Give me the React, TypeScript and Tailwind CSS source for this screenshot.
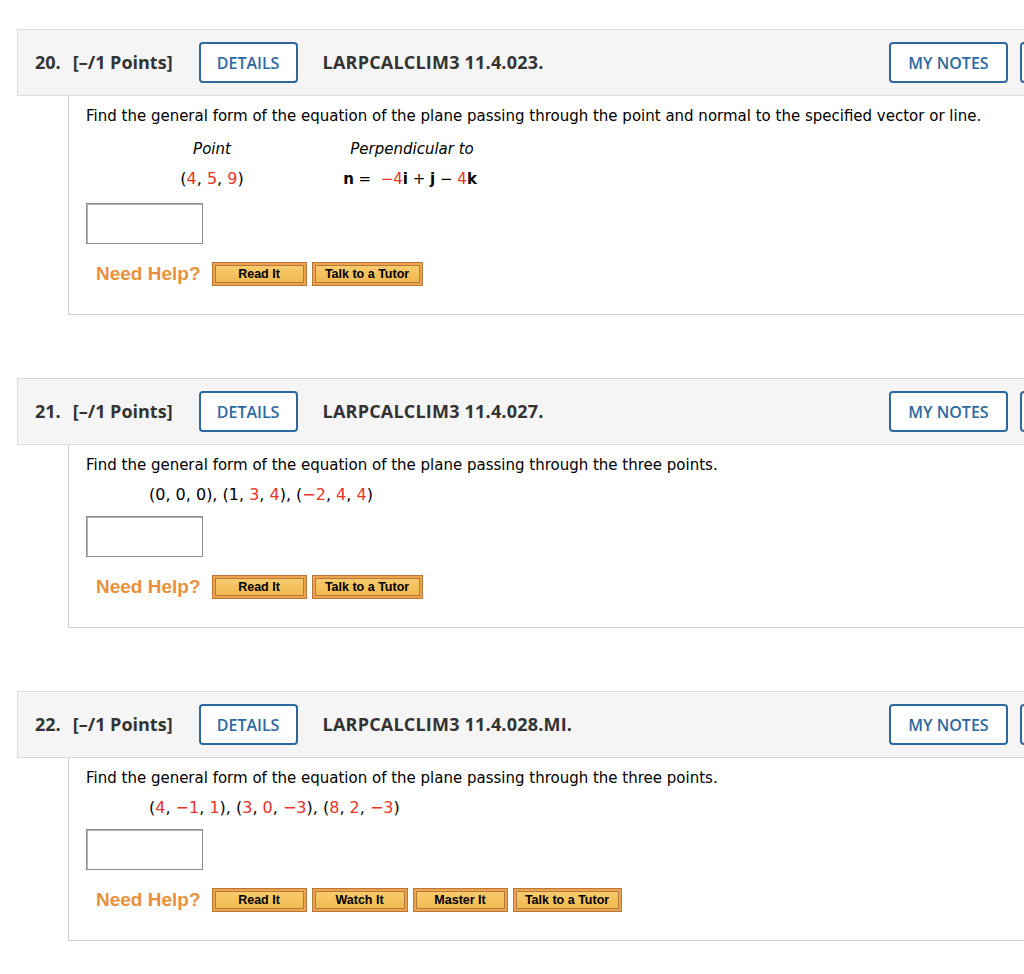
import React from "react";

const R = ({ children }: { children: React.ReactNode }) => (
  <span className="text-[#e8332a]">{children}</span>
);

const HelpButton = ({ label, w }: { label: string; w: string }) => (
  <div className={`h-[24px] ${w} border border-[#b7773a] bg-[#eea34c] p-[2px]`}>
    <div className="flex h-full items-center justify-center border border-[#b27a3e] bg-gradient-to-b from-[#f7cb6c] to-[#f1b951] text-[12.5px] font-bold text-black [font-family:'Liberation_Sans',Arial,sans-serif]">
      {label}
    </div>
  </div>
);

const Header = ({ num, code }: { num: number; code: string }) => (
  <div className="flex h-[67px] w-[1120px] items-center border border-[#dcdcdc] bg-[#f5f5f5] pl-[17px] pr-[16px] text-[#333] [font-family:'Open_Sans',sans-serif]">
    <span className="text-[18px] font-bold">{num}.</span>
    <span className="ml-[12px] text-[18px] font-bold">[–/1 Points]</span>
    <div className="ml-[26px] flex h-[41px] w-[99px] items-center justify-center rounded-[4px] border-2 border-[#2d69a0] bg-white text-[16px] font-semibold text-[#2d69a0]">
      DETAILS
    </div>
    <span className="ml-[25px] text-[18px] font-bold tracking-[0.2px]">{code}</span>
    <div className="ml-auto flex gap-[12px]">
      <div className="flex h-[41px] w-[119px] items-center justify-center rounded-[4px] border-2 border-[#2d69a0] bg-white text-[16px] font-semibold text-[#2d69a0]">
        MY NOTES
      </div>
      <div className="h-[41px] w-[100px] rounded-[4px] border-2 border-[#2d69a0] bg-white" />
    </div>
  </div>
);

const AnswerBox = () => (
  <div className="h-[41px] w-[117px] border border-[#8c8c8c] bg-white shadow-[inset_1px_1px_0_#b5b5b5]" />
);

const NeedHelp = ({ buttons }: { buttons: { label: string; w: string }[] }) => (
  <div className="flex h-[24px] items-center">
    <span className="ml-[10px] text-[19px] leading-[24px] font-bold text-[#e8913c] [font-family:'Liberation_Sans',Arial,sans-serif]">
      Need Help?
    </span>
    <div className="ml-[11px] flex gap-[5px]">
      {buttons.map((b) => (
        <HelpButton key={b.label} label={b.label} w={b.w} />
      ))}
    </div>
  </div>
);

const Body = ({ children }: { children: React.ReactNode }) => (
  <div className="ml-[51px] w-[1100px] border-b border-l border-[#cfcfcf] pl-[17px] text-[15px] text-black [font-family:'DejaVu_Sans',Verdana,sans-serif]">
    {children}
  </div>
);

export default function App() {
  return (
    <div className="min-h-screen w-full overflow-hidden bg-white pl-[17px] pt-[29px]">
      {/* 20 */}
      <Header num={20} code="LARPCALCLIM3 11.4.023." />
      <Body>
        <div className="pt-[10px] leading-[20px]">
          Find the general form of the equation of the plane passing through the point and normal to the specified vector or line.
        </div>
        <div className="mt-[13px] flex leading-[20px]">
          <div className="ml-[65px] w-[122px] text-center italic">Point</div>
          <div className="w-[278px] text-center italic">Perpendicular to</div>
        </div>
        <div className="mt-[10px] flex leading-[20px]">
          <div className="ml-[65px] w-[122px] text-center text-[16px]">
            (<R>4</R>, <R>5</R>, <R>9</R>)
          </div>
          <div className="w-[278px] pr-[4px] text-center">
            <b>n</b> = &nbsp;<R>−4</R>
            <b>i</b> + <b>j</b> − <R>4</R>
            <b>k</b>
          </div>
        </div>
        <div className="mt-[14px]">
          <AnswerBox />
        </div>
        <div className="mt-[18px] pb-[28px]">
          <NeedHelp
            buttons={[
              { label: "Read It", w: "w-[95px]" },
              { label: "Talk to a Tutor", w: "w-[111px]" },
            ]}
          />
        </div>
      </Body>

      {/* 21 */}
      <div className="mt-[63px]">
        <Header num={21} code="LARPCALCLIM3 11.4.027." />
        <Body>
          <div className="pt-[10px] leading-[20px]">
            Find the general form of the equation of the plane passing through the three points.
          </div>
          <div className="mt-[10px] pl-[63px] text-[16px] leading-[20px]">
            (0, 0, 0), (1, <R>3</R>, <R>4</R>), (<R>−2</R>, <R>4</R>, <R>4</R>)
          </div>
          <div className="mt-[11px]">
            <AnswerBox />
          </div>
          <div className="mt-[18px] pb-[28px]">
            <NeedHelp
              buttons={[
                { label: "Read It", w: "w-[95px]" },
                { label: "Talk to a Tutor", w: "w-[111px]" },
              ]}
            />
          </div>
        </Body>
      </div>

      {/* 22 */}
      <div className="mt-[63px]">
        <Header num={22} code="LARPCALCLIM3 11.4.028.MI." />
        <Body>
          <div className="pt-[10px] leading-[20px]">
            Find the general form of the equation of the plane passing through the three points.
          </div>
          <div className="mt-[10px] pl-[63px] text-[16px] leading-[20px]">
            (<R>4</R>, <R>−1</R>, <R>1</R>), (<R>3</R>, <R>0</R>, <R>−3</R>), (<R>8</R>, <R>2</R>, <R>−3</R>)
          </div>
          <div className="mt-[11px]">
            <AnswerBox />
          </div>
          <div className="mt-[18px] pb-[28px]">
            <NeedHelp
              buttons={[
                { label: "Read It", w: "w-[95px]" },
                { label: "Watch It", w: "w-[96px]" },
                { label: "Master It", w: "w-[95px]" },
                { label: "Talk to a Tutor", w: "w-[109px]" },
              ]}
            />
          </div>
        </Body>
      </div>
    </div>
  );
}
